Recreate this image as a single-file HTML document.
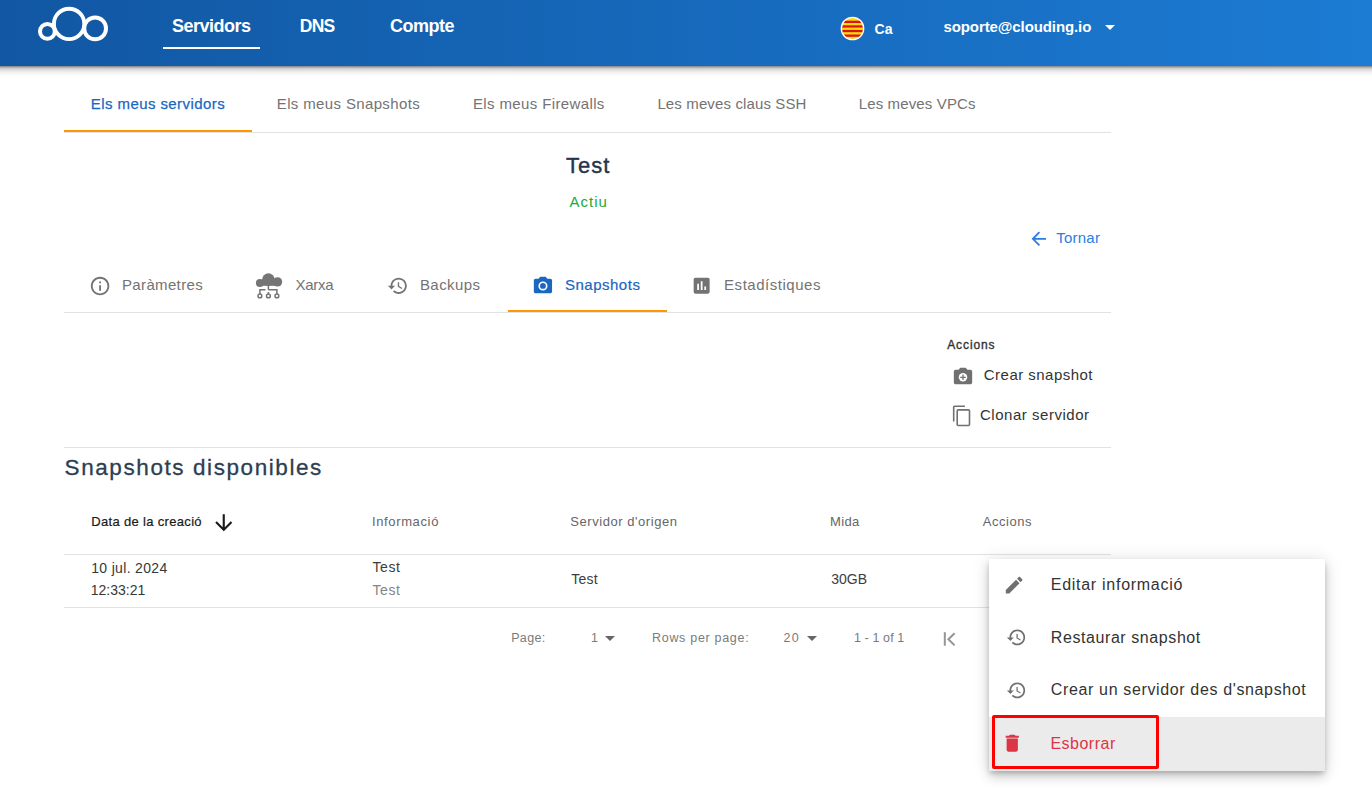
<!DOCTYPE html>
<html><head><meta charset="utf-8"><title>Snapshots</title>
<style>
html,body{margin:0;padding:0;background:#fff;width:1372px;height:801px;overflow:hidden;position:relative}
body{font-family:"Liberation Sans",sans-serif}
.t{position:absolute;white-space:nowrap}
.i{position:absolute;overflow:visible}
.b{position:absolute}
#hdr{position:absolute;left:-30px;top:0;width:1432px;height:66px;background:linear-gradient(90deg,#1157a3 30px,#1c7bd3 1402px);box-shadow:0 1px 2px rgba(0,0,0,0.35),0 2px 8px rgba(0,0,0,0.4)}
#menu{position:absolute;left:989px;top:559px;width:336px;height:212px;background:#fff;box-shadow:0 3px 5px -1px rgba(0,0,0,.2),0 6px 10px 0 rgba(0,0,0,.14),0 1px 18px 0 rgba(0,0,0,.12)}
</style></head><body>
<div id="hdr"></div>
<svg class="i" style="left:0;top:0;width:130px;height:66px" viewBox="0 0 130 66">
<g fill="none" stroke="#fff">
<circle cx="47.4" cy="31.4" r="7.4" stroke-width="4"/>
<circle cx="69.1" cy="23.9" r="15.2" stroke-width="3.9"/>
<circle cx="95.1" cy="28.4" r="10.9" stroke-width="4"/>
</g></svg>
<div class="t" style="left:172.0px;top:17.26px;font-size:18px;line-height:18px;color:#fff;font-weight:700;letter-spacing:-0.5px;">Servidors</div>
<div class="t" style="left:299.8px;top:17.69px;font-size:17.5px;line-height:17.5px;color:#fff;font-weight:700;letter-spacing:-0.8px;">DNS</div>
<div class="t" style="left:390.0px;top:17.26px;font-size:18px;line-height:18px;color:#fff;font-weight:700;letter-spacing:-0.5px;">Compte</div>
<div class="b" style="left:163px;top:46.5px;width:97px;height:2.4px;background:#fff"></div>
<svg class="i" style="left:840px;top:16px;width:25px;height:25px" viewBox="0 0 25 25">
<defs><clipPath id="fc"><circle cx="12.5" cy="12.5" r="11"/></clipPath></defs>
<g clip-path="url(#fc)">
<rect x="0" y="0" width="25" height="25" fill="#fcdd09"/>
<rect x="0" y="4.7" width="25" height="2.3" fill="#da121a"/>
<rect x="0" y="9.3" width="25" height="2.3" fill="#da121a"/>
<rect x="0" y="13.9" width="25" height="2.3" fill="#da121a"/>
<rect x="0" y="18.5" width="25" height="2.3" fill="#da121a"/>
</g>
<circle cx="12.5" cy="12.5" r="11.2" fill="none" stroke="#fff" stroke-width="1.3"/>
</svg>
<div class="t" style="left:874.5px;top:22.15px;font-size:14px;line-height:14px;color:#fff;font-weight:700;letter-spacing:0.2px;">Ca</div>
<div class="t" style="left:943.5px;top:19.10px;font-size:15px;line-height:15px;color:#fff;font-weight:700;letter-spacing:-0.1px;">soporte@clouding.io</div>
<div class="b" style="left:1104.5px;top:24.6px;width:0;height:0;border-left:5px solid transparent;border-right:5px solid transparent;border-top:5px solid #fff"></div>
<div class="t" style="left:90.8px;top:96.30px;font-size:15px;line-height:15px;color:#1967c1;font-weight:400;letter-spacing:0.42px;-webkit-text-stroke:0.25px #1967c1">Els meus servidors</div>
<div class="t" style="left:276.8px;top:96.30px;font-size:15px;line-height:15px;color:#737373;font-weight:400;letter-spacing:0.36px;">Els meus Snapshots</div>
<div class="t" style="left:472.9px;top:96.30px;font-size:15px;line-height:15px;color:#737373;font-weight:400;letter-spacing:0.38px;">Els meus Firewalls</div>
<div class="t" style="left:657.4px;top:96.30px;font-size:15px;line-height:15px;color:#737373;font-weight:400;letter-spacing:0.13px;">Les meves claus SSH</div>
<div class="t" style="left:858.7px;top:96.30px;font-size:15px;line-height:15px;color:#737373;font-weight:400;letter-spacing:0.14px;">Les meves VPCs</div>
<div class="b" style="left:64px;top:132px;width:1047px;height:1px;background:#e2e2e2"></div>
<div class="b" style="left:64px;top:130px;width:188px;height:2px;background:#ff9800"></div>
<div class="t" style="left:566.0px;top:155.28px;font-size:22px;line-height:22px;color:#27344a;font-weight:400;letter-spacing:1.0px;-webkit-text-stroke:0.4px #27344a">Test</div>
<div class="t" style="left:569.6px;top:194.10px;font-size:15px;line-height:15px;color:#22a93c;font-weight:400;letter-spacing:1.0px;">Actiu</div>
<svg class="i" style="left:1027.90px;top:227.90px;width:21.60px;height:21.60px;" viewBox="0 0 24 24"><path fill="#2b7de0" d="M20 11H7.83l5.59-5.59L12 4l-8 8 8 8 1.41-1.41L7.83 13H20v-2z"/></svg>
<div class="t" style="left:1056.2px;top:230.30px;font-size:15px;line-height:15px;color:#2b7de0;font-weight:400;letter-spacing:0.25px;">Tornar</div>
<svg class="i" style="left:88.90px;top:274.60px;width:22.20px;height:22.20px;" viewBox="0 0 24 24"><path fill="#737373" d="M11 7h2v2h-2zm0 4h2v6h-2zm1-9C6.48 2 2 6.48 2 12s4.48 10 10 10 10-4.48 10-10S17.52 2 12 2zm0 18c-4.41 0-8-3.59-8-8s3.59-8 8-8 8 3.59 8 8-3.59 8-8 8z"/></svg>
<div class="t" style="left:122.0px;top:277.30px;font-size:15px;line-height:15px;color:#737373;font-weight:400;letter-spacing:0.35px;">Paràmetres</div>
<svg class="i" style="left:255px;top:272px;width:28px;height:28px" viewBox="0 0 28 28">
<g fill="#757575">
<circle cx="4.9" cy="10.9" r="4.0"/>
<circle cx="13.4" cy="7.6" r="6.3"/>
<circle cx="22.5" cy="9.9" r="4.7"/>
<rect x="5" y="8" width="17" height="5.8"/>
</g>
<g fill="none" stroke="#757575" stroke-width="1.5">
<path d="M13.4 13.5v4.2M4.9 22V17.7h5.6M13.4 17.7h8.5V22M13.4 19.9v2.2"/>
<circle cx="4.9" cy="23.9" r="1.9"/>
<circle cx="13.4" cy="23.9" r="1.9"/>
<circle cx="21.9" cy="23.9" r="1.9"/>
</g></svg>
<div class="t" style="left:295.6px;top:277.00px;font-size:15px;line-height:15px;color:#737373;font-weight:400;letter-spacing:-0.3px;">Xarxa</div>
<svg class="i" style="left:387.10px;top:274.90px;width:21.60px;height:21.60px;" viewBox="0 0 24 24"><path fill="#737373" d="M13 3c-4.97 0-9 4.03-9 9H1l3.89 3.89.07.14L9 12H6c0-3.87 3.13-7 7-7s7 3.13 7 7-3.13 7-7 7c-1.93 0-3.68-.79-4.94-2.06l-1.42 1.42C8.27 19.99 10.51 21 13 21c4.97 0 9-4.03 9-9s-4.03-9-9-9zm-1 5v5l4.28 2.54.72-1.21-3.5-2.08V8H12z"/></svg>
<div class="t" style="left:419.9px;top:277.10px;font-size:15px;line-height:15px;color:#737373;font-weight:400;letter-spacing:0.45px;">Backups</div>
<svg class="i" style="left:532.00px;top:274.70px;width:21.90px;height:21.90px;" viewBox="0 0 24 24"><path fill="#1967c1" d="M12 15.2a3.2 3.2 0 1 0 0-6.4 3.2 3.2 0 0 0 0 6.4zM9 2L7.17 4H4c-1.1 0-2 .9-2 2v12c0 1.1.9 2 2 2h16c1.1 0 2-.9 2-2V6c0-1.1-.9-2-2-2h-3.17L15 2H9zm3 15c-2.76 0-5-2.24-5-5s2.24-5 5-5 5 2.24 5 5-2.24 5-5 5z"/></svg>
<div class="t" style="left:565.0px;top:276.90px;font-size:15px;line-height:15px;color:#1967c1;font-weight:400;letter-spacing:0.5px;-webkit-text-stroke:0.2px #1967c1">Snapshots</div>
<svg class="i" style="left:691.30px;top:274.90px;width:21.30px;height:21.30px;" viewBox="0 0 24 24"><path fill="#737373" d="M19 3H5c-1.1 0-2 .9-2 2v14c0 1.1.9 2 2 2h14c1.1 0 2-.9 2-2V5c0-1.1-.9-2-2-2zM9 17H7v-7h2v7zm4 0h-2V7h2v10zm4 0h-2v-4h2v4z"/></svg>
<div class="t" style="left:724.1px;top:277.20px;font-size:15px;line-height:15px;color:#737373;font-weight:400;letter-spacing:0.52px;">Estadístiques</div>
<div class="b" style="left:64px;top:312px;width:1047px;height:1px;background:#e2e2e2"></div>
<div class="b" style="left:508px;top:310px;width:159px;height:2px;background:#ff9800"></div>
<div class="t" style="left:947.2px;top:339.44px;font-size:12px;line-height:12px;color:#333;font-weight:400;letter-spacing:0.9px;-webkit-text-stroke:0.35px #333">Accions</div>
<svg class="i" style="left:951.5px;top:365.6px;width:22px;height:22px" viewBox="0 0 24 24">
<path fill="#707070" d="M9 2L7.17 4H4c-1.1 0-2 .9-2 2v12c0 1.1.9 2 2 2h16c1.1 0 2-.9 2-2V6c0-1.1-.9-2-2-2h-3.17L15 2H9z"/>
<circle cx="12" cy="12.3" r="4.6" fill="#fff"/>
<path fill="#707070" d="M11.3 9.3h1.4v2.3H15v1.4h-2.3v2.3h-1.4V13H9v-1.4h2.3z"/>
</svg>
<div class="t" style="left:983.8px;top:367.20px;font-size:15px;line-height:15px;color:#333;font-weight:400;letter-spacing:0.47px;">Crear snapshot</div>
<svg class="i" style="left:952px;top:405px;width:20px;height:22px" viewBox="0 0 20 22">
<g fill="none" stroke="#707070" stroke-width="1.6">
<path d="M1.7 16.5V2.3a1 1 0 0 1 1-1h10.2"/>
<rect x="5.2" y="4.9" width="12.3" height="15.6" rx="1"/>
</g></svg>
<div class="t" style="left:980.0px;top:407.10px;font-size:15px;line-height:15px;color:#333;font-weight:400;letter-spacing:0.52px;">Clonar servidor</div>
<div class="b" style="left:64px;top:447px;width:1047px;height:1px;background:#e2e2e2"></div>
<div class="t" style="left:64.6px;top:456.85px;font-size:22.5px;line-height:22.5px;color:#2c3e50;font-weight:400;letter-spacing:1.58px;-webkit-text-stroke:0.3px #2c3e50">Snapshots disponibles</div>
<div class="t" style="left:91.2px;top:514.80px;font-size:13px;line-height:13px;color:#1a1a1a;font-weight:400;letter-spacing:0.33px;-webkit-text-stroke:0.2px #1a1a1a">Data de la creació</div>
<svg class="i" style="left:211.10px;top:510.20px;width:25.50px;height:25.50px;" viewBox="0 0 24 24"><path fill="#1a1a1a" d="M20 12l-1.41-1.41L13 16.17V4h-2v12.17l-5.58-5.59L4 12l8 8 8-8z"/></svg>
<div class="t" style="left:372.0px;top:514.80px;font-size:13px;line-height:13px;color:#666;font-weight:400;letter-spacing:0.63px;">Informació</div>
<div class="t" style="left:570.3px;top:514.80px;font-size:13px;line-height:13px;color:#666;font-weight:400;letter-spacing:0.55px;">Servidor d'origen</div>
<div class="t" style="left:830.0px;top:514.80px;font-size:13px;line-height:13px;color:#666;font-weight:400;letter-spacing:0.35px;">Mida</div>
<div class="t" style="left:982.8px;top:514.80px;font-size:13px;line-height:13px;color:#666;font-weight:400;letter-spacing:0.55px;">Accions</div>
<div class="b" style="left:64px;top:554px;width:1047px;height:1px;background:#e2e2e2"></div>
<div class="t" style="left:91.2px;top:560.95px;font-size:14px;line-height:14px;color:#383838;font-weight:400;letter-spacing:0.33px;">10 jul. 2024</div>
<div class="t" style="left:90.8px;top:583.05px;font-size:14px;line-height:14px;color:#383838;font-weight:400;letter-spacing:0.0px;">12:33:21</div>
<div class="t" style="left:372.5px;top:560.25px;font-size:14px;line-height:14px;color:#3d3d3d;font-weight:400;letter-spacing:0.6px;">Test</div>
<div class="t" style="left:372.5px;top:583.15px;font-size:14px;line-height:14px;color:#858585;font-weight:400;letter-spacing:0.6px;">Test</div>
<div class="t" style="left:571.3px;top:572.15px;font-size:14px;line-height:14px;color:#3d3d3d;font-weight:400;letter-spacing:0.2px;">Test</div>
<div class="t" style="left:831.2px;top:572.15px;font-size:14px;line-height:14px;color:#3d3d3d;font-weight:400;letter-spacing:0.0px;">30GB</div>
<div class="b" style="left:64px;top:607px;width:1047px;height:1px;background:#e2e2e2"></div>
<div class="t" style="left:511.2px;top:631.72px;font-size:12.5px;line-height:12.5px;color:#7b7b7b;font-weight:400;letter-spacing:0.35px;">Page:</div>
<div class="t" style="left:591.0px;top:631.72px;font-size:12.5px;line-height:12.5px;color:#7b7b7b;font-weight:400;letter-spacing:0px;">1</div>
<div class="b" style="left:605px;top:636.3px;width:0;height:0;border-left:5px solid transparent;border-right:5px solid transparent;border-top:5px solid #666"></div>
<div class="t" style="left:652.0px;top:631.72px;font-size:12.5px;line-height:12.5px;color:#7b7b7b;font-weight:400;letter-spacing:0.7px;">Rows per page:</div>
<div class="t" style="left:783.5px;top:631.72px;font-size:12.5px;line-height:12.5px;color:#7b7b7b;font-weight:400;letter-spacing:1.2px;">20</div>
<div class="b" style="left:807px;top:636.3px;width:0;height:0;border-left:5px solid transparent;border-right:5px solid transparent;border-top:5px solid #666"></div>
<div class="t" style="left:854.0px;top:631.72px;font-size:12.5px;line-height:12.5px;color:#7b7b7b;font-weight:400;letter-spacing:0.1px;">1 - 1 of 1</div>
<svg class="i" style="left:940px;top:628px;width:20px;height:20px" viewBox="0 0 20 20">
<rect x="3.8" y="4.2" width="2" height="13.5" fill="#959595"/>
<path d="M14.6 5.2L8.4 11.3l6.2 6.1" fill="none" stroke="#959595" stroke-width="2"/>
</svg>
<div id="menu"></div>
<div class="b" style="left:989px;top:717px;width:336px;height:54px;background:#ebebeb"></div>
<svg class="i" style="left:1003.10px;top:573.70px;width:22.30px;height:22.30px;" viewBox="0 0 24 24"><path fill="#707070" d="M3 17.25V21h3.75L17.81 9.94l-3.75-3.75L3 17.25zM20.71 7.04c.39-.39.39-1.02 0-1.41l-2.34-2.34c-.39-.39-1.02-.39-1.41 0l-1.83 1.83 3.75 3.75 1.83-1.83z"/></svg>
<div class="t" style="left:1050.8px;top:577.36px;font-size:16px;line-height:16px;color:#333;font-weight:400;letter-spacing:0.72px;">Editar informació</div>
<svg class="i" style="left:1006.10px;top:627.40px;width:20.90px;height:20.90px;" viewBox="0 0 24 24"><path fill="#707070" d="M13 3c-4.97 0-9 4.03-9 9H1l3.89 3.89.07.14L9 12H6c0-3.87 3.13-7 7-7s7 3.13 7 7-3.13 7-7 7c-1.93 0-3.68-.79-4.94-2.06l-1.42 1.42C8.27 19.99 10.51 21 13 21c4.97 0 9-4.03 9-9s-4.03-9-9-9zm-1 5v5l4.28 2.54.72-1.21-3.5-2.08V8H12z"/></svg>
<div class="t" style="left:1050.8px;top:629.66px;font-size:16px;line-height:16px;color:#333;font-weight:400;letter-spacing:0.58px;">Restaurar snapshot</div>
<svg class="i" style="left:1006.10px;top:680.20px;width:20.90px;height:20.90px;" viewBox="0 0 24 24"><path fill="#707070" d="M13 3c-4.97 0-9 4.03-9 9H1l3.89 3.89.07.14L9 12H6c0-3.87 3.13-7 7-7s7 3.13 7 7-3.13 7-7 7c-1.93 0-3.68-.79-4.94-2.06l-1.42 1.42C8.27 19.99 10.51 21 13 21c4.97 0 9-4.03 9-9s-4.03-9-9-9zm-1 5v5l4.28 2.54.72-1.21-3.5-2.08V8H12z"/></svg>
<div class="t" style="left:1050.8px;top:682.16px;font-size:16px;line-height:16px;color:#333;font-weight:400;letter-spacing:0.64px;">Crear un servidor des d'snapshot</div>
<svg class="i" style="left:1001.20px;top:732.20px;width:22.50px;height:22.50px;" viewBox="0 0 24 24"><path fill="#dc3545" d="M6 19c0 1.1.9 2 2 2h8c1.1 0 2-.9 2-2V7H6v12zM19 4h-3.5l-1-1h-5l-1 1H5v2h14V4z"/></svg>
<div class="t" style="left:1050.4px;top:735.96px;font-size:16px;line-height:16px;color:#dc3545;font-weight:400;letter-spacing:0.5px;">Esborrar</div>
<div class="b" style="left:992px;top:715px;width:161px;height:48px;border:3px solid #f00;border-radius:2px"></div>
</body></html>
